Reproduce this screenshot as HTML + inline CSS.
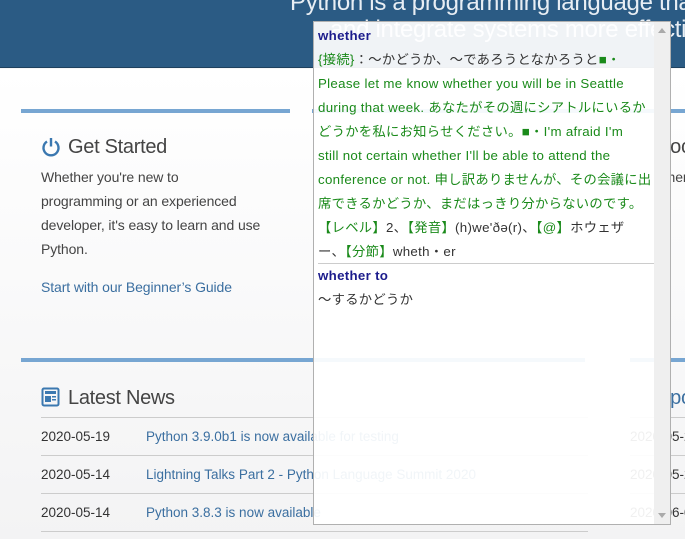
<!DOCTYPE html>
<html style="width:685px;height:539px;overflow:hidden"><head><meta charset="utf-8"><style>
*{margin:0;padding:0;box-sizing:border-box}
body{width:685px;height:539px;overflow:hidden;position:relative;background:#f6f6f7;font-family:"Liberation Sans","Noto Sans CJK JP",sans-serif}
.hdr{position:absolute;left:0;top:0;width:685px;height:68px;background:#2b5b84;border-bottom:1px solid #1e415e;overflow:hidden}
.hdr div{position:absolute;color:#e8eef4;font-size:24px;white-space:nowrap;letter-spacing:-0.3px}
.main{position:absolute;left:0;top:69px;width:685px;height:470px;background:linear-gradient(#fff,#f3f3f4)}
.bar{position:absolute;height:4px;background:#77a6d2}
h2{position:absolute;font-weight:normal;font-size:20px;color:#444;white-space:nowrap;letter-spacing:-0.3px}
.p{position:absolute;font-size:14px;color:#444;line-height:24px;letter-spacing:-0.1px;white-space:nowrap}
.lnk{color:#3b6fa0;text-decoration:none}
.row{position:absolute;left:41px;width:547px;height:38px;border-top:1px solid #ccc;font-size:13.5px;color:#333}
.row span{position:absolute;top:11px;white-space:nowrap}
.pop{position:absolute;left:313px;top:21px;width:358px;height:504px;border:1px solid #b0b0b0;background:rgba(255,255,255,0.93);font-size:13.3px;letter-spacing:0.3px;line-height:24px;color:#333;overflow:hidden}
.pop .c{position:absolute;left:4px;top:2px;width:340px;white-space:nowrap}
.g{color:#1a8a1a}.b{color:#1c1c8c;font-weight:bold}
.sb{position:absolute;right:0;top:0;width:16px;height:100%;background:rgba(238,238,238,0.95)}
</style></head><body>
<div class="hdr">
<div style="left:290px;top:-11px">Python is a programming language that</div>
<div style="left:330px;top:16px">and integrate systems more effective</div>
</div>
<div class="main">
<div class="bar" style="left:21px;top:40px;width:269px"></div>
<div class="bar" style="left:312px;top:40px;width:273px"></div>
<div class="bar" style="left:630px;top:40px;width:60px"></div>
<div class="bar" style="left:21px;top:289px;width:564px"></div>
<div class="bar" style="left:630px;top:289px;width:60px"></div>
</div>
<svg style="position:absolute;left:41px;top:137px" width="20" height="20" viewBox="0 0 20 20"><path d="M6 4.5A7.5 7.5 0 1 0 14 4.5" fill="none" stroke="#3b78b0" stroke-width="2.4"/><line x1="10" y1="1" x2="10" y2="9.5" stroke="#3b78b0" stroke-width="2.4"/></svg>
<h2 style="left:68px;top:136px">Get Started</h2>
<div class="p" style="left:41px;top:165px">Whether you're new to<br>programming or an experienced<br>developer, it's easy to learn and use<br>Python.</div>
<div class="p lnk" style="left:41px;top:275px">Start with our Beginner’s Guide</div>
<h2 style="left:656px;top:136px">Doc</h2>
<div class="p" style="left:656px;top:165px">umen<br>rd<br>id</div>
<div class="p lnk" style="left:656px;top:252px">ytl</div>
<svg style="position:absolute;left:41px;top:387px" width="20" height="20" viewBox="0 0 20 20"><rect x="1.5" y="1.5" width="16" height="17" rx="1.5" fill="none" stroke="#3b78b0" stroke-width="2"/><rect x="4" y="4" width="11" height="3" fill="#3b78b0"/><rect x="4" y="9" width="6" height="6" fill="#3b78b0"/><rect x="11" y="9" width="4" height="1.5" fill="#3b78b0"/><rect x="11" y="12" width="4" height="1.5" fill="#3b78b0"/></svg>
<h2 style="left:68px;top:387px">Latest News</h2>
<div class="row" style="top:417px"><span style="left:0">2020-05-19</span><span class="lnk" style="left:105px">Python 3.9.0b1 is now available for testing</span></div>
<div class="row" style="top:455px"><span style="left:0">2020-05-14</span><span class="lnk" style="left:105px">Lightning Talks Part 2 - Python Language Summit 2020</span></div>
<div class="row" style="top:493px"><span style="left:0">2020-05-14</span><span class="lnk" style="left:105px">Python 3.8.3 is now available</span></div>
<div class="row" style="top:531px;height:8px"></div>
<h2 style="left:656px;top:387px;color:#3b6fa0">Upc</h2>
<div class="row" style="left:630px;width:60px;top:417px"><span style="left:0">2020-05-2</span></div>
<div class="row" style="left:630px;width:60px;top:455px"><span style="left:0">2020-05-2</span></div>
<div class="row" style="left:630px;width:60px;top:493px"><span style="left:0">2020-06-0</span></div>
<div class="pop"><div class="c">
<div class="b">whether</div>
<div><span class="g">{接続}</span>：～かどうか、～であろうとなかろうと<span class="g">■・</span></div>
<div class="g">Please let me know whether you will be in Seattle</div>
<div class="g">during that week. あなたがその週にシアトルにいるか</div>
<div class="g">どうかを私にお知らせください。■・I'm afraid I'm</div>
<div class="g">still not certain whether I'll be able to attend the</div>
<div class="g">conference or not. 申し訳ありませんが、その会議に出</div>
<div class="g">席できるかどうか、まだはっきり分からないのです。</div>
<div><span class="g">【レベル】</span>2、<span class="g">【発音】</span>(h)we'ðə(r)、<span class="g">【@】</span>ホウェザ</div>
<div>ー、<span class="g">【分節】</span>wheth・er</div>
<div style="border-top:1px solid #ccc;margin-top:-1px;width:336px" class="b">whether to</div>
<div>～するかどうか</div>
</div>
<div class="sb"><div style="position:absolute;left:4px;top:6px;border:4px solid transparent;border-bottom:5px solid #aaa;border-top:0"></div><div style="position:absolute;left:4px;bottom:6px;border:4px solid transparent;border-top:5px solid #aaa;border-bottom:0"></div></div>
</div>
</body></html>
